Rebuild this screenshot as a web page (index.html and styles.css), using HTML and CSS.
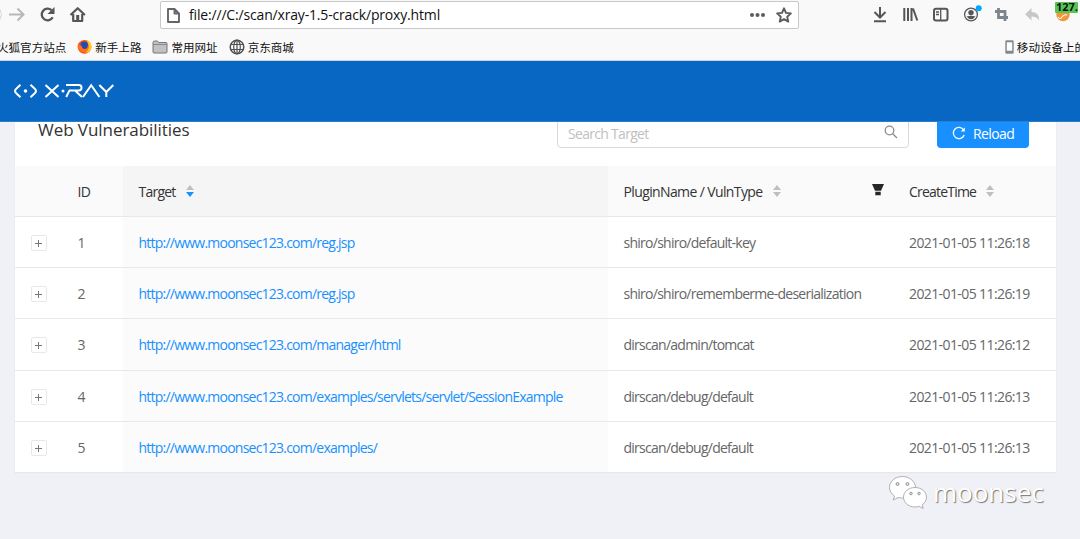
FILE: index.html
```html
<!DOCTYPE html>
<html lang="zh">
<head>
<meta charset="utf-8">
<title>X-RAY</title>
<link rel="stylesheet" href="styles.css">
</head>
<body>
<div class="browser">
  <div class="toolbar">
    <svg class="nav" width="90" height="30" viewBox="0 0 90 30" fill="none" stroke="#55555a" stroke-width="2.300">
      <path d="M0 9.500q3 5 0 10" stroke="#d8d8d8" stroke-width="1"/>
      <path d="M9 14.500h14M17.500 8.500l6 6l-6 6" stroke="#b8b8ba" stroke-width="2"/>
      <path d="M51.500 10.200a5.800 5.800 0 1 0 1.200 7"/><path d="M54.500 7v7h-7z" fill="#55555a" stroke="none"/>
      <path d="M70.500 15l7.200-6.800l7.200 6.800M73.200 14v7h9v-7" stroke-linejoin="round" stroke-width="2.200"/><path d="M76.200 15h3v6h-3z" fill="#55555a" stroke="none"/>
    </svg>
    <div class="urlbar">
      <svg width="13" height="15" viewBox="0 0 13 15" fill="none" stroke="#66666a" stroke-width="1.900" stroke-linejoin="round"><path d="M1 1h6.500l4.500 4.500v8.500h-11zM7.500 1v4.500h4.500"/></svg>
      <span class="url">file:///C:/scan/xray-1.5-crack/proxy.html</span>
      <svg class="url-tools" width="44" height="18" viewBox="0 0 44 18"><g fill="#5c5c60"><circle cx="4" cy="9" r="2"/><circle cx="9.500" cy="9" r="2"/><circle cx="15" cy="9" r="2"/></g><path d="M36 2.300l2 4.600l4.900.5l-3.700 3.300l1.100 4.900l-4.300-2.500l-4.300 2.500l1.100-4.900l-3.700-3.300l4.900-.5z" fill="none" stroke="#5c5c60" stroke-width="1.900" stroke-linejoin="round"/></svg>
    </div>
    <svg class="tools" width="210" height="30" viewBox="870 0 210 30" fill="none" stroke="#55555a" stroke-width="2">
      <path d="M880 7v10M874.500 12l5.500 5.500l5.500-5.500M874 21.300h12"/>
      <path d="M904.300 8v13M908 8v13M911.500 8v13M913 8.500l4.300 12" stroke-width="2"/>
      <rect x="934" y="8.800" width="13.500" height="11.700" rx="2"/><path d="M940.700 9v11.500M936 12h3M936 14.500h3" stroke-width="1.300"/>
      <circle cx="971" cy="14.500" r="6.400" stroke-width="1.300"/><circle cx="971" cy="12.600" r="2.700" fill="#55555a" stroke="none"/><path d="M966.500 16.500q4.500-1.500 9 0q-4.500 5.500-9 0z" fill="#55555a" stroke="none"/><circle cx="978.700" cy="8.300" r="3" fill="#00a8ff" stroke="none"/>
      <path d="M998.500 8v9.500h9.500M995 11.500h10v9.500" stroke="#7d858f" stroke-width="2.800"/>
      <path d="M1031.500 8v4q8 0 7.500 8.500q-2-4-7.500-4v4l-6.300-6.200z" fill="#c5c7ca" stroke="none"/>
      <circle cx="1063" cy="14.500" r="6.700" fill="#f3953a" stroke="none"/><path d="M1058 17q2 3 4 0t5-2" stroke="#fff" stroke-width="1.200"/>
      <rect x="1055" y="2" width="23" height="11" rx="1" fill="#55c655" stroke="none"/>
    </svg>
    <span class="badge">127.</span>
  </div>
  <div class="bookmarks">
    <span class="bm first">火狐官方站点</span>
    <svg class="bi fox" width="15" height="15" viewBox="0 0 15 15"><circle cx="7.500" cy="7.800" r="6.900" fill="#f2501d"/><circle cx="7.300" cy="6.200" r="3.800" fill="#244bb0"/><path d="M1 4q1 3 3.500 2.500q.5 4 4 3.500q2.500-1 2.500-4q3 4 0 6.500q-3 2-7 0q-4-3-3-8.500z" fill="#ff7216"/><path d="M9.500 .8q5.500 2.200 5 8q-1.500 5-6 5q4.500-4 3-8z" fill="#ffc825"/></svg>
    <span class="bm">新手上路</span>
    <svg class="bi folder" width="16" height="14" viewBox="0 0 16 14"><path d="M1 2.500q0-1.500 1.500-1.500h3l1 1.500h7.500q1 0 1 1v8.500q0 1-1 1h-12q-1 0-1-1z" fill="#c1c1c1" stroke="#77777a"/><path d="M1 4.500h14" stroke="#88888a"/></svg>
    <span class="bm">常用网址</span>
    <svg class="bi globe" width="16" height="16" viewBox="0 0 16 16" fill="none" stroke="#515155" stroke-width="1.200"><circle cx="8" cy="8" r="6.800" stroke-width="1.500"/><ellipse cx="8" cy="8" rx="3.300" ry="6.800"/><path d="M1.500 5.500h13M1.500 10.500h13M8 1v14"/></svg>
    <span class="bm">京东商城</span>
    <svg class="bi phone" width="9" height="14" viewBox="0 0 9 14"><rect x=".3" y=".3" width="8.400" height="13.400" rx="1.300" fill="#818a94"/><path d="M1.800 2.300h5.400v8.400h-5.400z" fill="#fff"/></svg>
    <span class="bm">移动设备上的</span>
  </div>
</div>
<header class="app-header">
  <svg width="102" height="18" viewBox="0 0 102 18" fill="none" stroke="#fff" stroke-width="2">
    <path d="M7.500 2.800L3.500 6.500q-3 2.500 0 5l4 3.700M17.500 2.800l4 3.700q3 2.500 0 5l-4 3.700"/><circle cx="12.500" cy="9" r="1.800" fill="#fff" stroke="none"/>
    <path d="M32.500 3l13 12M45.500 3l-13 12M53 3h13q2.500 0 2.500 2.700t-2.500 2.700h-9.500l-3.300 6.600M62.500 9l6.500 6M70 15l8.200-11.700l8.200 11.700M86.300 3l7 7l7-7M93.300 10v5"/><circle cx="50" cy="9" r="1.500" fill="#fff" stroke="none"/>
  </svg>
</header>
<main class="page">
  <section class="card">
    <div class="card-head">
      <h1 class="title">Web Vulnerabilities</h1>
      <div class="search"><span>Search Target</span><svg width="14" height="14" viewBox="0 0 14 14" fill="none" stroke="#8c8c8c" stroke-width="1.300"><circle cx="5.500" cy="5.500" r="4.300"/><path d="M8.700 8.700l4.300 4.300"/></svg></div>
      <div class="reload"><svg width="14" height="14" viewBox="0 0 14 14" fill="none" stroke="#fff" stroke-width="1.300"><path d="M11.700 4a5.600 5.600 0 1 0 .5 5"/><path d="M12.800 1.500v4h-4z" fill="#fff" stroke="none"/></svg><span>Reload</span></div>
    </div>
    <div class="row thead">
      <div></div><div class="id">ID</div>
      <div class="target">Target<svg class="sort" width="8" height="12" viewBox="0 0 8 12"><path d="M0 5l4-5l4 5z" fill="#bfbfbf"/><path d="M0 7l4 5l4-5z" fill="#1890ff"/></svg></div>
      <div class="plugin"><span>PluginName / VulnType</span><svg class="sort" width="8" height="12" viewBox="0 0 8 12"><path d="M0 5l4-5l4 5zM0 7l4 5l4-5z" fill="#bfbfbf"/></svg><svg class="filter" width="12" height="12" viewBox="0 0 12 12" fill="#262626"><path d="M0 0h12l-3 6.800h-6zM3.300 7.800h5.400v3.400h-5.400z"/></svg></div>
      <div class="time">CreateTime<svg class="sort" width="8" height="12" viewBox="0 0 8 12"><path d="M0 5l4-5l4 5zM0 7l4 5l4-5z" fill="#bfbfbf"/></svg></div>
    </div>
    <div class="row"><div><i class="plus"></i></div><div class="id">1</div><div class="target"><a>http://www.moonsec123.com/reg.jsp</a></div><div class="plugin">shiro/shiro/default-key</div><div class="time">2021-01-05 11:26:18</div></div>
    <div class="row"><div><i class="plus"></i></div><div class="id">2</div><div class="target"><a>http://www.moonsec123.com/reg.jsp</a></div><div class="plugin">shiro/shiro/rememberme-deserialization</div><div class="time">2021-01-05 11:26:19</div></div>
    <div class="row"><div><i class="plus"></i></div><div class="id">3</div><div class="target"><a>http://www.moonsec123.com/manager/html</a></div><div class="plugin">dirscan/admin/tomcat</div><div class="time">2021-01-05 11:26:12</div></div>
    <div class="row"><div><i class="plus"></i></div><div class="id">4</div><div class="target"><a>http://www.moonsec123.com/examples/servlets/servlet/SessionExample</a></div><div class="plugin">dirscan/debug/default</div><div class="time">2021-01-05 11:26:13</div></div>
    <div class="row"><div><i class="plus"></i></div><div class="id">5</div><div class="target"><a>http://www.moonsec123.com/examples/</a></div><div class="plugin">dirscan/debug/default</div><div class="time">2021-01-05 11:26:13</div></div>
  </section>
</main>
<div class="watermark">
  <svg width="40" height="36" viewBox="0 0 40 36"><g fill="#fff" stroke="#b0b0b3" stroke-width="1"><path d="M14.500 2.500c-7.500 0-13 4.800-13 11c0 3.500 2 6.500 5 8.500l-1.300 4l5-2.500c1.500.4 3 .5 4.300.5c7 0 13-4.500 13-10.500s-6-11-13-11z"/><path d="M27 13.500c-6.500 0-11.500 4.300-11.500 9.700s5 9.800 11.500 9.800c1.500 0 2.900-.2 4.200-.6l4 2l-1-3.500c2.700-1.800 4.300-4.600 4.300-7.700c0-5.400-5-9.700-11.500-9.700z"/></g><g fill="#ddd" stroke="#88888b" stroke-width=".8"><circle cx="9.500" cy="10" r="1.500"/><circle cx="19.500" cy="10" r="1.500"/><circle cx="23" cy="19.500" r="1.300"/><circle cx="31" cy="19.500" r="1.300"/></g></svg>
  <span>moonsec</span>
</div>
</body>
</html>
```
FILE: styles.css
```css
* { box-sizing: border-box; }
body { margin: 0; width: 1080px; height: 539px; overflow: hidden; background: #eff1f6; font-family: "Open Sans", "Noto Sans", sans-serif; font-size: 14px; color: #666; white-space: nowrap; }
svg { display: block; flex: none; }
.browser { height: 61px; background: #f9f9fa; border-bottom: 1px solid #ccd3da; overflow: hidden; }
.toolbar { position: relative; display: flex; height: 31px; }
.urlbar { display: flex; align-items: center; width: 639px; height: 28px; margin: 1px 0 0 70px; padding: 0 6px; border: 1px solid #c8c8c8; border-radius: 2px; background: #fff; }
.url { margin: -1px 0 0 9px; color: #111; font-size: 14px; letter-spacing: -.17px; }
.url-tools { margin-left: auto; }
.tools { margin-left: 71px; }
.badge { position: absolute; left: 1056px; top: 1px; font: bold 11px/12px "Open Sans", sans-serif; color: #111; }
.bookmarks { display: flex; align-items: center; height: 31px; color: #111; font: 11.55px "Noto Sans CJK SC", sans-serif; }
.bm { flex: none; }
.first { margin-left: -3px; }
.bi { margin-right: 3px; }
.fox, .folder, .globe { margin-left: 11px; }
.phone { margin-left: 711px; }
.app-header { height: 61px; padding: 21px 13px; background: #0767c2; border-bottom: 1px solid #2b7fd0; }
.page { padding: 0 24px 0 15px; }
.card { width: 1041px; background: #fff; box-shadow: 0 0 1px 0 #dcdde0; clip-path: inset(0 -2px -2px); }
.card-head { display: flex; height: 44px; padding-left: 23px; }
.title { width: 519px; margin: -5px 0 0; color: #333; font-size: 17px; line-height: 26px; font-weight: 400; letter-spacing: -.05px; }
.search { display: flex; justify-content: space-between; width: 352px; height: 32px; margin-top: -6px; padding: 2px 10px 0; align-items: center; border: 1px solid #d9d9d9; border-radius: 4px; color: #bfbfbf; letter-spacing: -.7px; }
.search svg { margin-top: -3px; }
.reload { display: flex; align-items: center; justify-content: center; gap: 7px; width: 92px; height: 32px; margin: -6px 0 0 28px; padding-top: 2px; border-radius: 4px; background: #1890ff; color: #fff; letter-spacing: -.6px; }
.row { display: grid; grid-template-columns: 47px 61px 485px 285px 163px; height: 51.2px; border-bottom: 1px solid #e8e8e8; }
.row > div { display: flex; align-items: center; padding: 1px 0 0 15.5px; letter-spacing: -.77px; }
.row .time { padding-left: 16px; letter-spacing: -.6px; }
.row .plugin { letter-spacing: -.74px; }
.row .target { background: #fbfbfb; }
.row.thead { background: #fafafa; color: #333; height: 51px; }
.row.thead > div { padding-top: 0; }
.thead .target { background: #f5f5f5; }
.row.thead .plugin { letter-spacing: -.62px; }
.row.thead .time { letter-spacing: -.8px; }
.target a { color: #1890ff; }
.sort { margin-left: 10px; }
.filter { margin: -2px 9px 0 auto; }
.plus { width: 16px; height: 16px; margin-top: 1px; border: 1px solid #e8e8e8; border-radius: 2px; background: linear-gradient(#777, #777) 3px 7px / 7px 1px no-repeat, linear-gradient(#777, #777) 6px 4px / 1px 7px no-repeat; }
.watermark { position: absolute; left: 888px; top: 474px; display: flex; align-items: center; gap: 5px; color: #fff; font-size: 26px; text-shadow: 1px 1px 1px #777; }
```
